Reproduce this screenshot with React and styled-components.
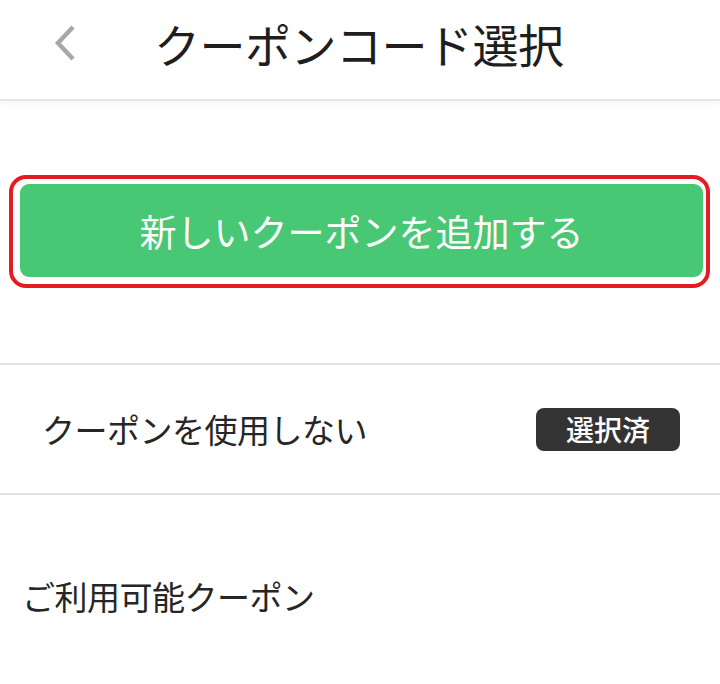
import React from 'react'
import styled, { createGlobalStyle } from 'styled-components'

const GlobalStyle = createGlobalStyle`
  body {
    margin: 0;
    background: #fff;
    font-family: "Noto Sans CJK JP", "Noto Sans", sans-serif;
  }
`

const Page = styled.div`
  width: 720px;
  min-height: 684px;
  background: #fff;
`

const Header = styled.header`
  height: 101px;
  box-sizing: border-box;
  padding-bottom: 13px;
  display: flex;
  align-items: center;
  border-bottom: 2px solid #e6e6e6;
  box-shadow: 0 3px 6px rgba(0, 0, 0, 0.04);
`

const BackButton = styled.button`
  width: 60px;
  height: 60px;
  margin-left: 36px;
  padding: 0;
  border: none;
  background: none;
  display: flex;
  align-items: center;
  justify-content: center;
`

const Title = styled.h1`
  margin: 0 0 0 58px;
  font-size: 46px;
  font-weight: 400;
  color: #1e1e1e;
  line-height: 1;
  letter-spacing: -0.5px;
`

const AddSection = styled.div`
  padding: 74px 10px 75px 9px;
`

const Outline = styled.div`
  border: 4px solid #e31b23;
  border-radius: 17px;
  padding: 5px 3px 7px 7px;
`

const AddButton = styled.button`
  width: 100%;
  height: 93px;
  border: none;
  border-radius: 9px;
  background: #48c774;
  color: #fff;
  font-family: inherit;
  font-size: 37px;
  font-weight: 400;
  display: flex;
  align-items: center;
  justify-content: center;
  padding: 0;
`

const Divider = styled.div`
  height: 2px;
  background: #e3e3e3;
`

const Row = styled.div`
  height: 128px;
  display: flex;
  align-items: center;
  justify-content: space-between;
  padding: 0 40px 0 42px;
`

const RowLabel = styled.span`
  font-size: 33px;
  color: #262626;
  letter-spacing: -0.5px;
`

const Badge = styled.span`
  width: 144px;
  height: 43px;
  border-radius: 8px;
  background: #333;
  color: #fff;
  font-size: 28px;
  font-weight: 500;
  display: flex;
  align-items: center;
  justify-content: center;
`

const SectionTitle = styled.h2`
  margin: 0;
  padding: 82px 0 0 22px;
  font-size: 33px;
  font-weight: 400;
  color: #262626;
  line-height: 1.2;
  letter-spacing: -0.5px;
`

const App = () => {
  return (
    <>
      <GlobalStyle />
      <Page>
        <Header>
          <BackButton aria-label="戻る">
            <svg width="26" height="38" viewBox="0 0 26 38">
              <path d="M20 3 L5 19 L20 35" fill="none" stroke="#a8a8a8" strokeWidth="4.5" />
            </svg>
          </BackButton>
          <Title>クーポンコード選択</Title>
        </Header>

        <AddSection>
          <Outline>
            <AddButton>新しいクーポンを追加する</AddButton>
          </Outline>
        </AddSection>

        <Divider />
        <Row>
          <RowLabel>クーポンを使用しない</RowLabel>
          <Badge>選択済</Badge>
        </Row>
        <Divider />

        <SectionTitle>ご利用可能クーポン</SectionTitle>
      </Page>
    </>
  )
}

export default App
